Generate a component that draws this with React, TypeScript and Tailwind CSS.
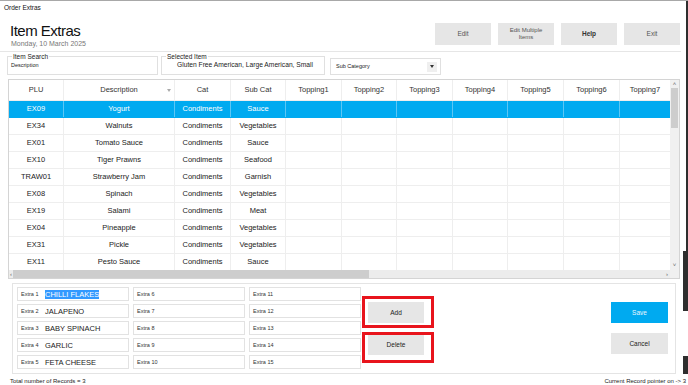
import React from "react";

const colW = [
  "w-[55px]",
  "w-[111px]",
  "w-[56px]",
  "w-[55px]",
  "w-[56px]",
  "w-[55px]",
  "w-[56px]",
  "w-[55px]",
  "w-[56px]",
  "w-[56px]",
  "w-[50px]",
];

const headers = [
  "PLU",
  "Description",
  "Cat",
  "Sub Cat",
  "Topping1",
  "Topping2",
  "Topping3",
  "Topping4",
  "Topping5",
  "Topping6",
  "Topping7",
];

const rows: string[][] = [
  ["EX09", "Yogurt", "Condiments", "Sauce"],
  ["EX34", "Walnuts", "Condiments", "Vegetables"],
  ["EX01", "Tomato Sauce", "Condiments", "Sauce"],
  ["EX10", "Tiger Prawns", "Condiments", "Seafood"],
  ["TRAW01", "Strawberry Jam", "Condiments", "Garnish"],
  ["EX08", "Spinach", "Condiments", "Vegetables"],
  ["EX19", "Salami", "Condiments", "Meat"],
  ["EX04", "Pineapple", "Condiments", "Vegetables"],
  ["EX31", "Pickle", "Condiments", "Vegetables"],
  ["EX11", "Pesto Sauce", "Condiments", "Sauce"],
];

const extrasCol1 = ["CHILLI FLAKES", "JALAPENO", "BABY SPINACH", "GARLIC", "FETA CHEESE"];

function ExtraBox({ n, value, selected }: { n: number; value?: string; selected?: boolean }) {
  return (
    <div className="h-[14px] border border-[#e2e2e2] bg-white flex items-center pl-[3px]">
      <span className="w-[24px] shrink-0 text-[5.5px] text-[#333]">Extra {n}</span>
      {value && (
        <span
          className={
            "text-[7.5px] leading-[9px] " +
            (selected ? "bg-[#3399ff] text-white" : "text-[#222]")
          }
        >
          {value}
        </span>
      )}
    </div>
  );
}

export default function App() {
  return (
    <div className="relative w-[688px] h-[385px] overflow-hidden bg-white border-t border-[#a8a8a8] font-['Liberation_Sans',Arial,sans-serif] text-[#222]">
      {/* title bar */}
      <div className="h-[13px] pl-[4px] flex items-center text-[6.5px] text-[#111]">Order Extras</div>

      {/* heading */}
      <div className="w-[681px] h-[38px] border-b border-[#e6e6e6] flex">
        <div className="pl-[10px] pt-[9px] flex flex-col">
          <div className="text-[15px] leading-[15px] tracking-[-0.5px] text-[#111]">Item Extras</div>
          <div className="mt-[2px] pl-[1px] text-[7px] leading-[8px] text-[#777]">Monday, 10 March 2025</div>
        </div>
        <div className="ml-auto pt-[9px] flex gap-[7px] pr-[1px]">
          <div className="w-[56px] h-[22px] bg-[#e6e6e6] flex items-center justify-center text-[6.5px] text-[#555]">Edit</div>
          <div className="w-[56px] h-[22px] bg-[#e6e6e6] flex items-center justify-center text-center text-[6px] leading-[7px] text-[#555]">
            Edit Multiple
            <br />
            Items
          </div>
          <div className="w-[56px] h-[22px] bg-[#e6e6e6] flex items-center justify-center text-[6.5px] font-bold text-[#333]">Help</div>
          <div className="w-[56px] h-[22px] bg-[#e6e6e6] flex items-center justify-center text-[6.5px] text-[#555]">Exit</div>
        </div>
      </div>

      {/* search row */}
      <div className="flex items-start pl-[7px] pt-[1px] h-[26px]">
        <fieldset className="w-[151px] h-[22px] border border-[#e0e0e0] pl-[3px]">
          <legend className="ml-[1px] px-[1px] text-[6.5px] leading-[7px] text-[#222]">Item Search</legend>
          <div className="text-[5.5px] leading-[8px] text-[#222] mt-[1px]">Description</div>
        </fieldset>
        <fieldset className="ml-[3px] w-[164px] h-[22px] border border-[#e0e0e0] pl-[15px]">
          <legend className="-ml-[11px] px-[1px] text-[6.5px] leading-[7px] text-[#222]">Selected Item</legend>
          <div className="text-[6.7px] leading-[9px] text-[#222]">Gluten Free American, Large American, Small</div>
        </fieldset>
        <div className="ml-[5px] mt-[5px] w-[111px] h-[17px] border border-[#e0e0e0] flex items-center pl-[5px] pr-[3px]">
          <span className="text-[5.5px] text-[#222]">Sub Category</span>
          <div className="ml-auto w-[10px] h-[10px] bg-[#efefef] flex items-center justify-center">
            <svg width="4" height="3" viewBox="0 0 4 3">
              <path d="M0 0 L4 0 L2 3 Z" fill="#333" />
            </svg>
          </div>
        </div>
      </div>

      {/* grid */}
      <div className="ml-[8px] mt-[1px] w-[672px] h-[200px] border border-[#d4d4d4] flex">
        <div className="w-[661px] flex flex-col">
          <div className="h-[190px] overflow-hidden">
            {/* header */}
            <div className="flex h-[21px] border-b border-[#eeeeee] bg-white">
              {headers.map((h, i) => (
                <div
                  key={h}
                  className={
                    colW[i] +
                    " shrink-0 relative flex items-center justify-center text-[7.5px] text-[#333] " +
                    (i < headers.length - 1 ? "border-r border-[#eeeeee]" : "")
                  }
                >
                  {h}
                  {i === 1 && (
                    <svg className="absolute right-[3px] top-[9px]" width="4" height="3" viewBox="0 0 4 3">
                      <path d="M0 0 L4 0 L2 3 Z" fill="#aaa" />
                    </svg>
                  )}
                </div>
              ))}
            </div>
            {rows.map((r, ri) => {
              const sel = ri === 0;
              return (
                <div
                  key={ri}
                  className={
                    "flex h-[17px] border-b " +
                    (sel ? "bg-[#00aaf0] border-[#00aaf0] text-white" : "bg-white border-[#eeeeee] text-[#222]")
                  }
                >
                  {headers.map((_, ci) => (
                    <div
                      key={ci}
                      className={
                        colW[ci] +
                        " shrink-0 flex items-center justify-center text-[7.5px] " +
                        (ci < headers.length - 1
                          ? sel
                            ? "border-r border-[#5cc6f5]"
                            : "border-r border-[#eeeeee]"
                          : "")
                      }
                    >
                      {r[ci] ?? ""}
                    </div>
                  ))}
                </div>
              );
            })}
          </div>
          {/* horizontal scrollbar */}
          <div className="h-[8px] bg-[#ececec] flex items-center">
            <span className="w-[4px] text-[6px] leading-[6px] text-[#666] flex justify-center">‹</span>
            <div className="w-[356px] h-[8px] bg-[#cdcdcd]" />
            <span className="ml-auto mr-[2px] text-[6px] leading-[6px] text-[#666]">›</span>
          </div>
        </div>
        {/* vertical scrollbar */}
        <div className="w-[9px] bg-[#f0f0f0] flex flex-col items-center">
          <span className="h-[8px] text-[6px] leading-[8px] text-[#666]">˄</span>
          <div className="w-[7px] h-[40px] bg-[#cdcdcd]" />
          <span className="mt-auto mb-[10px] text-[6px] leading-[6px] text-[#666]">˅</span>
        </div>
      </div>

      {/* bottom panel */}
      <div className="ml-[12px] mt-[4px] w-[664px] h-[91px] border border-[#e4e4e4] flex">
        <div className="ml-[4px] mt-[3px] grid grid-cols-[112px_112px_112px] gap-x-[4px] gap-y-[3px] grid-flow-col grid-rows-5 h-[82px]">
          {extrasCol1.map((v, i) => (
            <ExtraBox key={"a" + i} n={i + 1} value={v} selected={i === 0} />
          ))}
          {[6, 7, 8, 9, 10].map((n) => (
            <ExtraBox key={"b" + n} n={n} />
          ))}
          {[11, 12, 13, 14, 15].map((n) => (
            <ExtraBox key={"c" + n} n={n} />
          ))}
        </div>
        <div className="ml-[1px] mt-[12px] flex flex-col gap-[4px]">
          <div className="w-[72px] h-[32px] border-[3px] border-[#e8141c] pl-[3px] pt-[3px]">
            <div className="w-[56px] h-[21px] bg-[#e6e6e6] flex items-center justify-center text-[6.5px] text-[#222]">Add</div>
          </div>
          <div className="w-[72px] h-[31px] border-[3px] border-[#e8141c] pl-[3px]">
            <div className="w-[56px] h-[20px] bg-[#e6e6e6] flex items-center justify-center text-[6.5px] text-[#222]">Delete</div>
          </div>
        </div>
        <div className="ml-auto mr-[7px] mt-[18px] flex flex-col gap-[10px]">
          <div className="w-[57px] h-[21px] bg-[#00aaf0] flex items-center justify-center text-[6.5px] text-[#e8f7ff]">Save</div>
          <div className="w-[57px] h-[21px] bg-[#e6e6e6] flex items-center justify-center text-[6.5px] text-[#222]">Cancel</div>
        </div>
      </div>

      {/* footer */}
      <div className="flex pl-[10px] pr-[2px] pt-[3px] text-[6px] leading-[8px] text-[#222]">
        <span>Total number of Records = 3</span>
        <span className="ml-auto">Current Record pointer on -&gt; 3</span>
      </div>

      {/* window edge artifacts */}
      <div className="absolute right-0 top-0 w-[2px] h-[250px] bg-[#2e2e2e]" />
      <div className="absolute right-0 top-[250px] w-[5px] h-[60px] bg-[#2e2e2e]" />
      <div className="absolute right-0 top-[355px] w-[5px] h-[18px] bg-[#2e2e2e]" />
    </div>
  );
}
